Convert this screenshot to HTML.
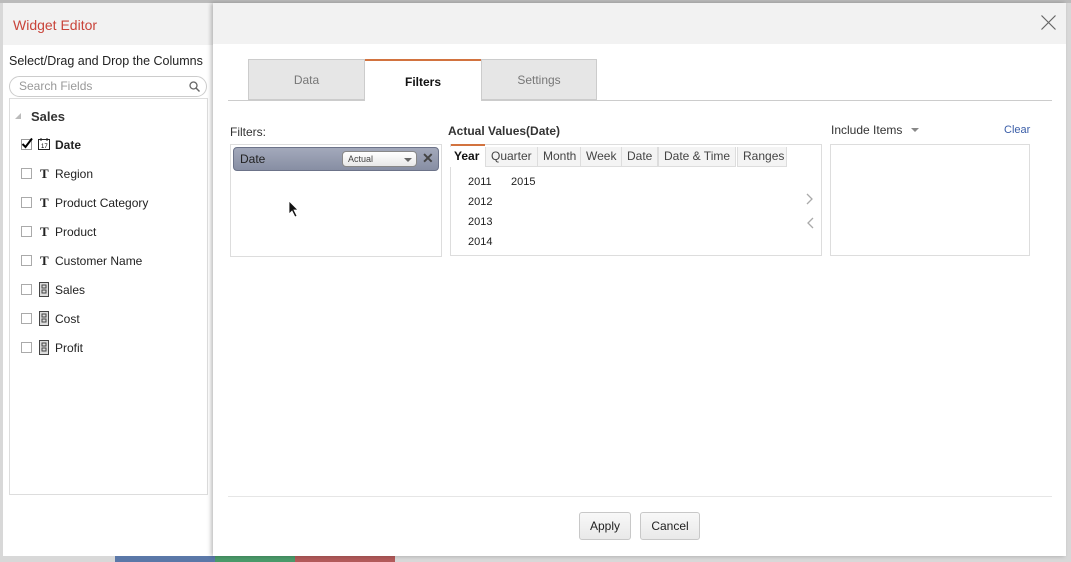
<!DOCTYPE html>
<html><head><meta charset="utf-8"><style>
*{box-sizing:border-box;margin:0;padding:0}
body{width:1071px;height:562px;position:relative;overflow:hidden;background:#d8d8d8;font-family:"Liberation Sans",Arial,sans-serif;font-size:12px;color:#222}
.abs{position:absolute}
.left{left:3px;top:3px;width:212px;height:553px;background:#fff}
.lhead{left:0;top:0;width:212px;height:42px;background:#f2f2f2}
.modal{left:213px;top:3px;width:853px;height:553px;background:#fff;box-shadow:-2px 0 4px rgba(0,0,0,.25)}
.cb{width:11px;height:11px;border:1px solid #aaa;background:#fff}
.row{position:absolute;left:21px;width:180px;height:16px;font-size:12px;white-space:nowrap}
.row span{white-space:nowrap}
.tab{position:absolute;top:59px;height:41px;border:1px solid #ccc;background:#e6e6e6;text-align:center;line-height:40px;color:#777;font-size:12px}
.yt{position:absolute;top:147px;height:20px;border:1px solid #ddd;border-top:none;line-height:19px;padding:0 5px;font-size:12px;color:#444;background:#f4f4f4;white-space:nowrap}
.yr{position:absolute;font-size:11px;color:#222}
.btn{position:absolute;top:512px;height:28px;border:1px solid #c8c8c8;border-radius:3px;background:linear-gradient(#f8f8f8,#e9e9e9);line-height:26px;text-align:center;font-size:12px}
</style></head><body>
<div class="abs" style="left:0;top:0;width:1071px;height:3px;background:#bbb"></div>
<div class="abs" style="left:115px;top:556px;width:100px;height:6px;background:#5b78a8"></div>
<div class="abs" style="left:215px;top:556px;width:80px;height:6px;background:#4a9a6a"></div>
<div class="abs" style="left:295px;top:556px;width:100px;height:6px;background:#b25a5a"></div>

<div class="abs left">
 <div class="abs lhead"><div class="abs" style="left:10px;top:14px;color:#c9443a;font-size:14px">Widget Editor</div></div>
 <div class="abs" style="left:6px;top:51px;font-size:12.5px;color:#222;white-space:nowrap">Select/Drag and Drop the Columns</div>
 <div class="abs" style="left:6px;top:73px;width:198px;height:21px;border:1px solid #ccc;border-radius:11px;padding-left:9px;line-height:19px;color:#999;font-size:12px">Search Fields
  <svg class="abs" style="right:6px;top:4px" width="11" height="11"><circle cx="4.5" cy="4.5" r="3.5" fill="none" stroke="#666" stroke-width="1.3"/><line x1="7" y1="7" x2="10.5" y2="10.5" stroke="#666" stroke-width="1.4"/></svg></div>
 <div class="abs" style="left:6px;top:95px;width:199px;height:397px;border:1px solid #ddd"></div>
 <div class="abs" style="left:12px;top:110px;width:0;height:0;border-left:6px solid transparent;border-bottom:6px solid #bbb"></div>
 <div class="abs" style="left:28px;top:106px;font-weight:bold;font-size:13px;color:#333">Sales</div>
</div>
<div class="row" style="top:137px"><svg class="abs" style="left:0;top:0" width="12" height="13"><rect x="0.5" y="2.5" width="10" height="10" fill="#fff" stroke="#999"/><path d="M1.5 7 L4.5 10 L11 1.5" fill="none" stroke="#000" stroke-width="2"/></svg>
 <svg class="abs" style="left:17px;top:1px" width="12" height="12"><rect x="0.5" y="1.5" width="11" height="10" fill="#fff" stroke="#222"/><line x1="3" y1="0" x2="3" y2="3" stroke="#222"/><line x1="9" y1="0" x2="9" y2="3" stroke="#222"/><text x="3" y="10" font-size="6" font-family="Liberation Sans">17</text></svg>
 <span class="abs" style="left:34px;top:1px;font-weight:bold">Date</span></div>
<div class="row" style="top:166px"><div class="abs cb" style="left:0;top:2px"></div><span class="abs" style="left:19px;top:0;font-family:'Liberation Serif',serif;font-weight:bold;font-size:13px">T</span><span class="abs" style="left:34px;top:1px">Region</span></div>
<div class="row" style="top:195px"><div class="abs cb" style="left:0;top:2px"></div><span class="abs" style="left:19px;top:0;font-family:'Liberation Serif',serif;font-weight:bold;font-size:13px">T</span><span class="abs" style="left:34px;top:1px">Product Category</span></div>
<div class="row" style="top:224px"><div class="abs cb" style="left:0;top:2px"></div><span class="abs" style="left:19px;top:0;font-family:'Liberation Serif',serif;font-weight:bold;font-size:13px">T</span><span class="abs" style="left:34px;top:1px">Product</span></div>
<div class="row" style="top:253px"><div class="abs cb" style="left:0;top:2px"></div><span class="abs" style="left:19px;top:0;font-family:'Liberation Serif',serif;font-weight:bold;font-size:13px">T</span><span class="abs" style="left:34px;top:1px">Customer Name</span></div>
<div class="row" style="top:282px"><div class="abs cb" style="left:0;top:2px"></div><svg class="abs" style="left:18px;top:0" width="10" height="15"><rect x="0.5" y="0.5" width="9" height="14" fill="#ddd" stroke="#444"/><rect x="3" y="3" width="4" height="3" fill="none" stroke="#444"/><rect x="3" y="8" width="4" height="3" fill="none" stroke="#444"/></svg><span class="abs" style="left:34px;top:1px">Sales</span></div>
<div class="row" style="top:311px"><div class="abs cb" style="left:0;top:2px"></div><svg class="abs" style="left:18px;top:0" width="10" height="15"><rect x="0.5" y="0.5" width="9" height="14" fill="#ddd" stroke="#444"/><rect x="3" y="3" width="4" height="3" fill="none" stroke="#444"/><rect x="3" y="8" width="4" height="3" fill="none" stroke="#444"/></svg><span class="abs" style="left:34px;top:1px">Cost</span></div>
<div class="row" style="top:340px"><div class="abs cb" style="left:0;top:2px"></div><svg class="abs" style="left:18px;top:0" width="10" height="15"><rect x="0.5" y="0.5" width="9" height="14" fill="#ddd" stroke="#444"/><rect x="3" y="3" width="4" height="3" fill="none" stroke="#444"/><rect x="3" y="8" width="4" height="3" fill="none" stroke="#444"/></svg><span class="abs" style="left:34px;top:1px">Profit</span></div>

<div class="abs modal"></div>
<div class="abs" style="left:213px;top:3px;width:853px;height:41px;background:#f2f2f2"></div>
<svg class="abs" style="left:1041px;top:15px" width="15" height="15"><path d="M0.5 0.5 L14.5 14.5 M14.5 0.5 L0.5 14.5" stroke="#666" stroke-width="1.2"/></svg>

<div class="abs" style="left:228px;top:100px;width:824px;height:1px;background:#ccc"></div>
<div class="tab" style="left:248px;width:117px">Data</div>
<div class="tab" style="left:365px;width:116px;background:#fff;border:none;border-top:2px solid #d2733f;color:#111;font-weight:bold;height:42px;line-height:42px">Filters</div>
<div class="tab" style="left:481px;width:116px">Settings</div>

<div class="abs" style="left:230px;top:125px;color:#333">Filters:</div>
<div class="abs" style="left:230px;top:144px;width:212px;height:113px;border:1px solid #ddd"></div>
<div class="abs" style="left:233px;top:147px;width:206px;height:24px;border:1px solid #6c7389;border-radius:4px;background:linear-gradient(#a3a9bb,#878ea3)"><span class="abs" style="left:6px;top:4px;color:#222;font-size:12px">Date</span>
 <div class="abs" style="left:108px;top:3px;width:75px;height:16px;border-radius:4px;background:linear-gradient(#fff,#e8e8e8);border:1px solid #888;font-size:9px;line-height:14px;padding-left:5px;color:#444">Actual<div class="abs" style="right:4px;top:6px;border-left:4px solid transparent;border-right:4px solid transparent;border-top:4px solid #666"></div></div>
 <span class="abs" style="left:188px;top:2px;font-size:14px;font-weight:bold;color:#444">✕</span></div>
<svg class="abs" style="left:288px;top:200px" width="12" height="18"><path d="M1 1 L1 14 L4 11 L7 17 L9 16 L6 10 L10 10 Z" fill="#111" stroke="#fff" stroke-width="0.8"/></svg>

<div class="abs" style="left:448px;top:124px;font-weight:bold;color:#333">Actual Values(Date)</div>
<div class="abs" style="left:450px;top:144px;width:372px;height:112px;border:1px solid #ddd"></div>
<div class="abs" style="left:451px;top:144px;width:34px;height:2px;background:#d2733f"></div>
<div class="yt" style="left:450px;width:35px;background:#fff;border:none;font-weight:bold;color:#111;padding:0 4px">Year</div>
<div class="yt" style="left:485px">Quarter</div>
<div class="yt" style="left:537px">Month</div>
<div class="yt" style="left:580px">Week</div>
<div class="yt" style="left:621px">Date</div>
<div class="yt" style="left:658px">Date &amp; Time</div>
<div class="yt" style="left:737px;width:50px">Ranges</div>
<div class="yr" style="left:468px;top:176px">2011</div>
<div class="yr" style="left:511px;top:176px">2015</div>
<div class="yr" style="left:468px;top:196px">2012</div>
<div class="yr" style="left:468px;top:216px">2013</div>
<div class="yr" style="left:468px;top:236px">2014</div>
<svg class="abs" style="left:806px;top:193px" width="8" height="36"><path d="M1 1 L6 6 L1 11" fill="none" stroke="#aaa" stroke-width="1.3"/><path d="M7 25 L2 30 L7 35" fill="none" stroke="#aaa" stroke-width="1.3"/></svg>

<div class="abs" style="left:831px;top:123px;color:#333">Include Items</div>
<div class="abs" style="left:911px;top:128px;border-left:4px solid transparent;border-right:4px solid transparent;border-top:4px solid #888"></div>
<div class="abs" style="left:1004px;top:124px;color:#3b5ea8;font-size:11px">Clear</div>
<div class="abs" style="left:830px;top:144px;width:200px;height:112px;border:1px solid #ddd"></div>

<div class="abs" style="left:228px;top:496px;width:824px;height:1px;background:#e6e6e6"></div>
<div class="btn" style="left:579px;width:52px">Apply</div>
<div class="btn" style="left:640px;width:60px">Cancel</div>
</body></html>
